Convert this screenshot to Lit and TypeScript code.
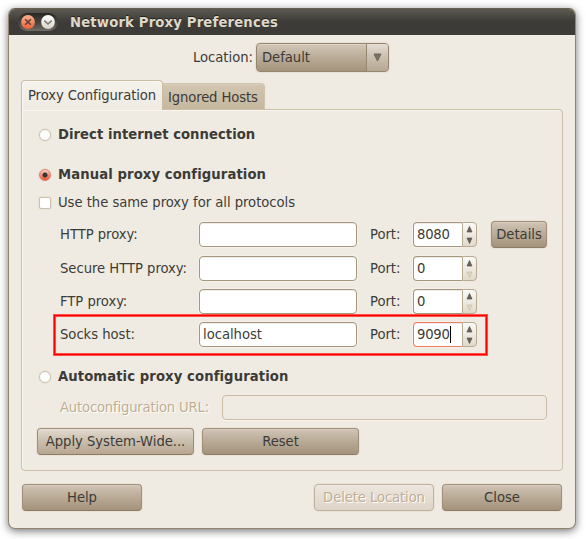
import { LitElement, html, css, nothing } from "lit";
import { customElement } from "lit/decorators.js";
import { classMap } from "lit/directives/class-map.js";

interface ProxyRow {
  label: string;
  host: string;
  port: string;
  atMinimum?: boolean;
  details?: boolean;
  focused?: boolean;
}

const rows: ProxyRow[] = [
  { label: "HTTP proxy:", host: "", port: "8080", details: true },
  { label: "Secure HTTP proxy:", host: "", port: "0", atMinimum: true },
  { label: "FTP proxy:", host: "", port: "0", atMinimum: true },
  { label: "Socks host:", host: "localhost", port: "9090", focused: true },
];

@customElement("app-root")
export class AppRoot extends LitElement {
  static styles = css`
    :host {
      display: block;
      width: 586px;
      height: 539px;
      padding: 8px 10px 10px 8px;
      box-sizing: border-box;
      background: #fff;
      overflow: hidden;
      font: 14.67px/20px "DejaVu Sans Condensed", "DejaVu Sans", sans-serif;
      letter-spacing: -0.03px;
      color: #3c3b37;
      white-space: nowrap;
    }
    * { box-sizing: border-box; }
    .window {
      width: 568px;
      height: 521px;
      border: 1px solid #93836c;
      border-top-color: #6b5f50;
      border-radius: 7px;
      background: #efebe3;
      box-shadow: 0 2px 8px rgba(0, 0, 0, 0.55);
      display: flex;
      flex-direction: column;
    }
    .title {
      height: 26px;
      flex: none;
      border-radius: 6px 6px 0 0;
      background: linear-gradient(#5c5a51, #3c3b37 50%, #3c3b37);
      display: flex;
      align-items: center;
      padding-left: 9px;
      color: #dfd8c8;
      font-weight: bold;
      letter-spacing: 0.18px;
      text-shadow: 0 -1px #24231f;
    }
    .controls {
      width: 40px;
      height: 18px;
      flex: none;
      border-radius: 9px;
      margin-right: 12px;
      background: linear-gradient(#282723, #4b4942 60%, #706d65);
      display: flex;
      align-items: center;
      gap: 6px;
      padding-left: 3px;
    }
    .controls svg, .arrow { display: block; flex: none; }
    .location {
      display: flex;
      align-items: center;
      height: 29px;
      margin: 8px 0 8px 184px;
      gap: 4px;
    }
    .location span { margin-top: -2px; }
    .location .caption { width: 59px; }
    .combo {
      width: 133px;
      height: 29px;
      border: 1px solid #95866f;
      border-radius: 4px;
      background: linear-gradient(#d3c7b8, #b9ab97 50%, #a5947c);
      box-shadow: inset 0 1px rgba(255, 255, 255, 0.25), 0 0 0 1px rgba(225, 216, 202, 0.6);
      display: flex;
      align-items: center;
      padding-left: 5px;
    }
    .drop {
      margin-left: auto;
      width: 22px;
      height: 27px;
      border-left: 1px solid #96866f;
      border-radius: 0 3px 3px 0;
      background: linear-gradient(#e4ddd2, #cabeae 50%, #b6a895);
      display: flex;
      align-items: center;
      justify-content: center;
    }
    .tabs {
      height: 30px;
      flex: none;
      margin: 0 0 -1px 12px;
      display: flex;
      align-items: flex-end;
      position: relative;
    }
    .tab {
      height: 26px;
      width: 102px;
      border: 1px solid #d0c4ae;
      border-left: 0;
      border-bottom: 0;
      border-radius: 0 4px 0 0;
      margin-bottom: 1px;
      padding: 3px 0 0 5px;
      letter-spacing: -0.13px;
      background: linear-gradient(#d2c6b1, #c6b89e);
      box-shadow: inset 0 1px #d9cfbd;
    }
    .tab.active {
      height: 30px;
      width: 142px;
      border: 1px solid #cbbda3;
      border-bottom: 0;
      border-radius: 4px 4px 0 0;
      margin: 0;
      padding: 4px 0 0 6px;
      letter-spacing: -0.08px;
      background: linear-gradient(#f5f2ec, #efebe3);
      box-shadow: inset 1px 1px #faf8f4;
    }
    .pane {
      width: 542px;
      height: 362px;
      flex: none;
      margin-left: 12px;
      border: 1px solid #cbbfa5;
      border-radius: 0 4px 4px 4px;
      box-shadow: inset 1px 1px #f8f6f1;
      padding: 15px 0 0 17px;
      display: flex;
      flex-direction: column;
    }
    .option {
      height: 20px;
      flex: none;
      display: flex;
      align-items: center;
      gap: 7px;
    }
    .option span { margin-top: -2px; }
    .option.bold { font-weight: bold; letter-spacing: 0.1px; }
    .option.direct { letter-spacing: 0.04px; }
    .manual { margin-top: 20px; }
    .same { margin-top: 8px; }
    .auto { margin-top: 19px; }
    .mark {
      width: 12px;
      height: 12px;
      border: 1px solid #cbc1ae;
      border-radius: 50%;
      background: #fff;
      box-shadow: 0 0 0 1px rgba(220, 211, 194, 0.35);
    }
    .mark.box { border-radius: 2px; }
    .mark.on {
      border-color: #df7b66;
      background: radial-gradient(circle at 50% 50%, #3b3431 0 2px, transparent 3px),
        linear-gradient(#f8d3c8, #f0907a 50%, #f05738);
    }
    .grid {
      margin: 8px 0 0 21px;
      display: grid;
      grid-template-rows: 28px 27px 27px 27px;
      row-gap: 6px;
      position: relative;
    }
    .row {
      display: grid;
      grid-template-columns: 139px 171px 43px 78px 56px;
      grid-template-rows: 27px;
      align-items: center;
    }
    .row > span { margin-top: -2px; }
    .entry {
      width: 158px;
      height: 25px;
      border: 1px solid #a6967c;
      border-radius: 4px;
      background: #fff;
      box-shadow: 0 0 0 1px rgba(248, 245, 239, 0.6), inset 0 1px #eeece8;
      padding: 1px 0 0 3px;
      color: #3c3b37;
    }
    .spin { display: flex; width: 64px; height: 25px; }
    .spin .entry {
      width: 49px;
      border-radius: 4px 0 0 4px;
      border-right: 0;
      letter-spacing: -0.2px;
      display: flex;
    }
    .spin.focused .entry { border-color: #ef7b65; }
    .caret {
      width: 1px;
      height: 17px;
      margin-top: 2px;
      background: #000;
    }
    .steps {
      width: 15px;
      height: 25px;
      border: 1px solid #b9aa92;
      border-radius: 0 4px 4px 0;
      background: linear-gradient(#fbfaf8, #e1d9cb);
      display: flex;
      flex-direction: column;
      align-items: center;
      justify-content: space-between;
      padding: 3px 0 2px;
    }
    .highlight {
      position: absolute;
      left: -7px;
      top: 93px;
      width: 435px;
      height: 42px;
      border: 3px solid #ff4e48;
      pointer-events: none;
    }
    .highlight::after {
      content: "";
      position: absolute;
      inset: -2px;
      border: 1px solid #ff0000;
    }
    .button {
      height: 27px;
      border: 1px solid #9f8f79;
      border-bottom-color: #8e7b65;
      border-radius: 4px;
      background: linear-gradient(#d0c4b5, #b9aa96 50%, #a4937b);
      box-shadow: inset 0 1px rgba(255, 255, 255, 0.18), 0 0 0 1px rgba(228, 219, 205, 0.55);
      display: flex;
      align-items: center;
      justify-content: center;
      padding-bottom: 2px;
      color: #3c3b37;
    }
    .button.light { background: linear-gradient(#e2dbd0, #c9bdac 50%, #b6a792); }
    .button.disabled {
      color: #bfae94;
      text-shadow: 1px 1px #fff;
      letter-spacing: -0.1px;
      border-color: #bfb19b;
      background: linear-gradient(#ece6dd, #dfd5c9);
    }
    .url {
      display: flex;
      align-items: center;
      height: 25px;
      margin: 8px 0 0 21px;
      color: #bfae94;
      text-shadow: 1px 1px #fff;
    }
    .url .caption { width: 162px; margin-top: -1px; letter-spacing: -0.18px; }
    .url .entry {
      width: 325px;
      background: #efebe3;
      border-color: #cbbca3;
      box-shadow: 0 1px #f8f6f1;
    }
    .actions { display: flex; gap: 8px; margin: 8px 0 0 -2px; }
    .actions .button { width: 157px; }
    .footer {
      margin: 13px 13px 0;
      display: flex;
      gap: 8px;
    }
    .footer .button { width: 120px; }
    .spacer { flex: 1; }
  `;

  private arrow(up: boolean, off = false) {
    return html`<svg class="arrow" width="7" height="7" viewBox="0 0 7 7">
      <path d=${up ? "M3.5 .5 6 6H1z" : "M3.5 6.5 1 1h5z"} fill=${off ? "#e2d8c6" : "#666158"} stroke=${off ? "#c8baa1" : "#59564f"} stroke-width=".7"/>
    </svg>`;
  }

  private row(r: ProxyRow) {
    return html`<div class="row">
      <span>${r.label}</span>
      <div class="entry">${r.host}</div>
      <span>Port:</span>
      <div class=${classMap({ spin: true, focused: !!r.focused })}>
        <div class="entry">${r.port}${r.focused ? html`<i class="caret"></i>` : nothing}</div>
        <div class="steps">${this.arrow(true)}${this.arrow(false, r.atMinimum)}</div>
      </div>
      ${r.details ? html`<div class="button">Details</div>` : nothing}
    </div>`;
  }

  render() {
    return html`<div class="window">
      <div class="title">
        <div class="controls">
          <svg width="14" height="14" viewBox="0 0 14 14">
            <defs>
              <linearGradient id="orange" x2="0" y2="1"><stop stop-color="#f9b08f"/><stop offset="1" stop-color="#ec6236"/></linearGradient>
            </defs>
            <circle cx="7" cy="7" r="6.9" fill="url(#orange)"/>
            <path d="M4.2 4.2l5.6 5.6M9.8 4.2L4.2 9.8" stroke="#5f4034" stroke-width="1.6"/>
          </svg>
          <svg width="14" height="14" viewBox="0 0 14 14">
            <defs>
              <linearGradient id="pale" x2="0" y2="1"><stop stop-color="#fff"/><stop offset="1" stop-color="#d9d4c8"/></linearGradient>
            </defs>
            <circle cx="7" cy="7" r="6.9" fill="url(#pale)"/>
            <path d="M3.3 5.6L7 9l3.7-3.4" stroke="#7d7a72" stroke-width="1.6" fill="none"/>
          </svg>
        </div>
        <span>Network Proxy Preferences</span>
      </div>
      <div class="location">
        <span class="caption">Location:</span>
        <div class="combo">
          <span>Default</span>
          <div class="drop">
            <svg class="arrow" width="9" height="9" viewBox="0 0 9 9"><path d="M1 1h7L4.5 8z" fill="#77726a" stroke="#5f5b54" stroke-width=".8"/></svg>
          </div>
        </div>
      </div>
      <div class="tabs">
        <div class="tab active">Proxy Configuration</div>
        <div class="tab">Ignored Hosts</div>
      </div>
      <div class="pane">
        <div class="option bold direct"><i class="mark"></i><span>Direct internet connection</span></div>
        <div class="option bold manual"><i class="mark on"></i><span>Manual proxy configuration</span></div>
        <div class="option same"><i class="mark box"></i><span>Use the same proxy for all protocols</span></div>
        <div class="grid">
          ${rows.map((r) => this.row(r))}
          <div class="highlight"></div>
        </div>
        <div class="option bold auto"><i class="mark"></i><span>Automatic proxy configuration</span></div>
        <div class="url"><span class="caption">Autoconfiguration URL:</span><div class="entry"></div></div>
        <div class="actions">
          <div class="button light">Apply System-Wide...</div>
          <div class="button">Reset</div>
        </div>
      </div>
      <div class="footer">
        <div class="button">Help</div>
        <div class="spacer"></div>
        <div class="button disabled">Delete Location</div>
        <div class="button">Close</div>
      </div>
    </div>`;
  }
}
